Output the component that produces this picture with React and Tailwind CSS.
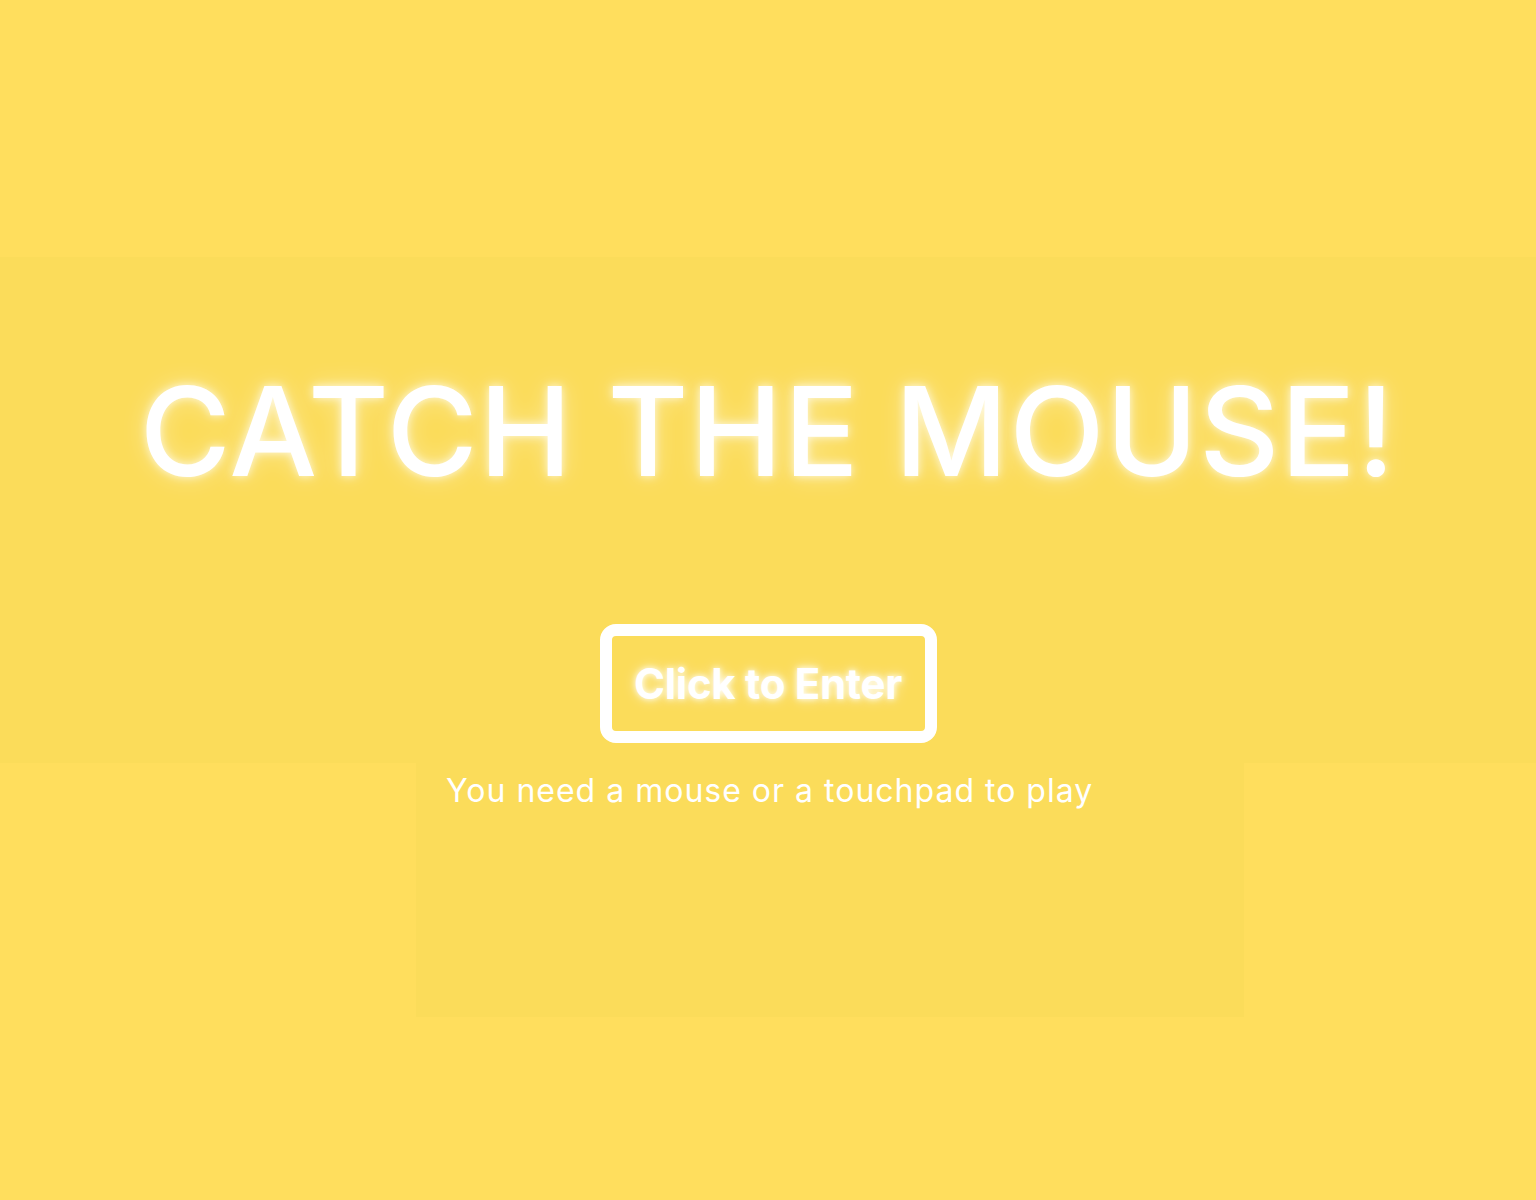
import React from 'react';

const glow = '[text-shadow:0_0_6px_rgba(255,255,255,1),0_0_14px_rgba(255,255,255,0.6)]';

const App = () => {
  return (
    <div className="min-h-screen h-[1200px] flex flex-col bg-[#ffde5d] text-white font-['Inter',sans-serif] overflow-hidden">
      <div className="h-[257px]" />

      {/* title + enter button */}
      <section className="h-[506px] flex flex-col items-center bg-[#fbdc5a]">
        <h1 className="mt-[112px] text-[124px] leading-none font-medium tracking-[1.5px] [text-shadow:0_0_10px_rgba(255,255,255,0.8),0_0_24px_rgba(255,255,255,0.4)]">
          CATCH THE MOUSE!
        </h1>
        <button className="mt-[131px] w-[337px] h-[119px] rounded-[16px] border-[12px] border-white flex items-center justify-center">
          <span className={`text-[42px] font-bold tracking-[-0.3px] ${glow}`}>Click to Enter</span>
        </button>
      </section>

      <div className="ml-[416px] w-[828px] h-[254px] bg-[#fbdc5a] pl-[30px]">
        <p className="mt-[4px] text-[32px] font-normal tracking-[1px]">You need a mouse or a touchpad to play</p>
      </div>
    </div>
  );
};

export default App;
